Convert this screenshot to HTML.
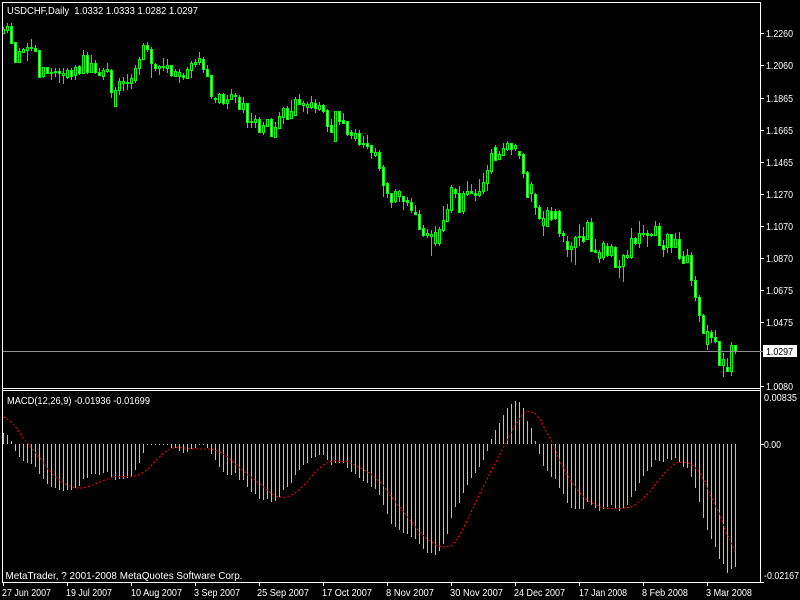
<!DOCTYPE html>
<html><head><meta charset="utf-8"><title>USDCHF Daily</title>
<style>
html,body{margin:0;padding:0;background:#000;width:800px;height:600px;overflow:hidden}
svg{display:block}
text{font-family:"Liberation Sans",sans-serif;font-size:10.5px;fill:#fff}
</style></head><body>
<svg id="s" width="800" height="600" viewBox="0 0 800 600" xmlns="http://www.w3.org/2000/svg">
<rect width="800" height="600" fill="#000"/>
<g id="g" shape-rendering="crispEdges"></g>
<g fill="#fff" shape-rendering="crispEdges">
<rect x="2" y="2" width="759" height="1"/>
<rect x="2" y="2" width="1" height="581"/>
<rect x="760" y="2" width="1" height="581"/>
<rect x="2" y="388" width="759" height="1"/>
<rect x="2" y="390" width="759" height="1"/>
<rect x="2" y="582" width="762" height="1"/>
<rect x="761" y="33" width="3" height="1"/><rect x="761" y="65" width="3" height="1"/><rect x="761" y="98" width="3" height="1"/><rect x="761" y="130" width="3" height="1"/><rect x="761" y="162" width="3" height="1"/><rect x="761" y="194" width="3" height="1"/><rect x="761" y="226" width="3" height="1"/><rect x="761" y="258" width="3" height="1"/><rect x="761" y="290" width="3" height="1"/><rect x="761" y="322" width="3" height="1"/><rect x="761" y="386" width="3" height="1"/><rect x="761" y="444" width="3" height="1"/>
<rect x="3" y="583" width="1" height="3"/><rect x="67" y="583" width="1" height="3"/><rect x="131" y="583" width="1" height="3"/><rect x="195" y="583" width="1" height="3"/><rect x="259" y="583" width="1" height="3"/><rect x="323" y="583" width="1" height="3"/><rect x="387" y="583" width="1" height="3"/><rect x="451" y="583" width="1" height="3"/><rect x="515" y="583" width="1" height="3"/><rect x="579" y="583" width="1" height="3"/><rect x="643" y="583" width="1" height="3"/><rect x="707" y="583" width="1" height="3"/>
</g>
<rect x="3" y="351" width="760" height="1" fill="#909090" shape-rendering="crispEdges"/>
<rect x="763" y="345" width="34" height="12" fill="#fff" shape-rendering="crispEdges"/>
<text x="7" y="14" textLength="191" lengthAdjust="spacingAndGlyphs" xml:space="preserve">USDCHF,Daily  1.0332 1.0333 1.0282 1.0297</text>
<text x="7" y="404" textLength="143" lengthAdjust="spacingAndGlyphs">MACD(12,26,9) -0.01936 -0.01699</text>
<text x="5.5" y="579" textLength="237" lengthAdjust="spacingAndGlyphs">MetaTrader, ? 2001-2008 MetaQuotes Software Corp.</text>
<g>
<text x="766" y="37" textLength="27" lengthAdjust="spacingAndGlyphs">1.2260</text>
<text x="766" y="69" textLength="27" lengthAdjust="spacingAndGlyphs">1.2060</text>
<text x="766" y="102" textLength="27" lengthAdjust="spacingAndGlyphs">1.1865</text>
<text x="766" y="134" textLength="27" lengthAdjust="spacingAndGlyphs">1.1665</text>
<text x="766" y="166" textLength="27" lengthAdjust="spacingAndGlyphs">1.1465</text>
<text x="766" y="198" textLength="27" lengthAdjust="spacingAndGlyphs">1.1270</text>
<text x="766" y="230" textLength="27" lengthAdjust="spacingAndGlyphs">1.1070</text>
<text x="766" y="262" textLength="27" lengthAdjust="spacingAndGlyphs">1.0870</text>
<text x="766" y="294" textLength="27" lengthAdjust="spacingAndGlyphs">1.0675</text>
<text x="766" y="326" textLength="27" lengthAdjust="spacingAndGlyphs">1.0475</text>
<text x="766" y="355" textLength="27" lengthAdjust="spacingAndGlyphs" style="fill:#000">1.0297</text>
<text x="766" y="390" textLength="27" lengthAdjust="spacingAndGlyphs">1.0080</text>
<text x="764" y="401" textLength="33" lengthAdjust="spacingAndGlyphs">0.00835</text>
<text x="764" y="448" textLength="17" lengthAdjust="spacingAndGlyphs">0.00</text>
<text x="764" y="579" textLength="35" lengthAdjust="spacingAndGlyphs">-0.02167</text>
</g>
<g>
<text x="2" y="596" textLength="49" lengthAdjust="spacingAndGlyphs">27 Jun 2007</text>
<text x="66" y="596" textLength="46" lengthAdjust="spacingAndGlyphs">19 Jul 2007</text>
<text x="131" y="596" textLength="51" lengthAdjust="spacingAndGlyphs">10 Aug 2007</text>
<text x="194" y="596" textLength="46" lengthAdjust="spacingAndGlyphs">3 Sep 2007</text>
<text x="257" y="596" textLength="52" lengthAdjust="spacingAndGlyphs">25 Sep 2007</text>
<text x="322" y="596" textLength="50" lengthAdjust="spacingAndGlyphs">17 Oct 2007</text>
<text x="386" y="596" textLength="48" lengthAdjust="spacingAndGlyphs">8 Nov 2007</text>
<text x="450" y="596" textLength="53" lengthAdjust="spacingAndGlyphs">30 Nov 2007</text>
<text x="514" y="596" textLength="51" lengthAdjust="spacingAndGlyphs">24 Dec 2007</text>
<text x="579" y="596" textLength="48" lengthAdjust="spacingAndGlyphs">17 Jan 2008</text>
<text x="642" y="596" textLength="46" lengthAdjust="spacingAndGlyphs">8 Feb 2008</text>
<text x="706" y="596" textLength="46" lengthAdjust="spacingAndGlyphs">3 Mar 2008</text>
</g>
</svg>
<script>
var c1=[[88,98,80,100,0],[78,90,68,100,0],[78,130,68,132,1],[127,185,127,186,1],[153,186,143,188,0],[148,155,143,160,0],[142,150,128,183,0],[142,145,117,152,0],[145,153,135,155,1],[150,230,150,232,1],[202,227,200,235,0],[202,218,200,222,1],[215,218,205,240,0],[213,217,203,232,0],[213,220,205,250,1],[220,226,205,252,0],[210,232,205,238,0],[210,228,205,240,1],[202,225,195,240,0],[198,219,195,225,1],[165,220,150,222,0],[165,215,155,222,1],[190,215,165,220,0],[190,215,180,222,1],[217,226,205,228,1],[210,227,205,240,0],[208,213,188,218,0],[210,275,208,295,1],[270,317,262,322,0],[243,271,235,285,0],[244,248,230,272,0],[246,249,222,270,0],[235,250,222,268,0],[205,240,195,250,0],[178,205,170,225,0],[135,178,130,180,0],[135,148,127,155,1],[148,190,142,235,1],[193,203,190,212,1],[198,205,195,225,0],[198,201,175,212,0],[196,203,177,218,0],[196,226,195,230,1],[213,227,208,232,0],[217,228,208,250,0],[225,232,218,240,1],[208,233,200,237,0],[190,210,183,235,0],[186,192,178,200,0],[175,187,156,195,0],[178,207,172,220,1],[207,227,195,228,1],[226,287,225,298,1],[295,298,290,308,0],[283,305,280,312,0],[283,308,280,315,1],[298,308,285,328,0],[281,298,266,300,0],[284,289,280,310,1],[290,327,285,328,1],[310,327,290,338,0],[310,365,310,385,1],[362,366,340,385,0],[358,366,345,385,0],[358,395,350,396,1]];
var c2=[[135,155,125,165,0],[118,137,118,140,0],[118,168,115,172,1],[142,172,125,174,0],[108,145,97,147,0],[85,110,82,132,0],[85,117,78,120,1],[94,114,60,118,0],[58,105,52,108,0],[58,72,42,75,1],[69,74,63,97,0],[72,80,65,102,0],[65,82,48,88,0],[68,85,58,98,1],[76,87,65,93,0],[76,93,72,98,1],[90,137,88,155,1],[136,156,117,158,1],[94,184,94,185,0],[94,122,94,135,1],[121,129,99,132,1],[124,161,122,168,1],[156,164,150,178,1],[160,174,148,182,0],[160,192,150,198,1],[190,192,168,205,0],[190,197,165,206,1],[196,215,194,236,1],[217,225,205,232,0],[217,263,210,273,1],[262,314,255,350,1],[310,340,306,355,1],[340,365,340,384,1],[334,364,328,370,0],[334,347,330,367,0],[347,362,347,390,1],[361,366,350,378,1],[367,389,354,399,1],[395,402,375,405,1],[403,446,390,448,1],[445,465,435,472,1],[460,466,447,474,0],[463,467,450,528,0],[457,488,438,498,0],[448,488,442,498,0],[421,449,378,456,0],[388,424,372,426,0],[322,389,316,400,0],[328,340,325,355,1],[340,396,318,398,1],[340,392,334,402,0],[332,341,304,347,0],[332,338,312,342,1],[338,345,328,362,1],[332,344,297,350,0],[307,333,280,342,0],[271,308,255,333,0],[220,272,208,283,0],[202,240,195,243,1],[223,238,213,240,0],[205,225,190,228,0],[190,207,183,212,0],[190,208,188,225,1],[195,205,193,212,0],[214,224,212,237,1],[223,278,220,293,1],[277,350,273,350,1]];
var c3=[[163,190,157,215,0],[193,232,190,255,1],[232,265,225,270,1],[265,285,243,318,0],[240,288,232,292,0],[243,268,232,272,1],[243,265,238,270,1],[243,310,240,322,1],[309,316,302,335,1],[332,358,318,380,1],[349,358,335,395,0],[322,350,318,405,0],[319,322,283,348,0],[319,332,292,340,1],[277,326,270,330,0],[277,362,265,365,1],[361,367,328,370,1],[367,383,360,398,0],[340,382,332,390,0],[349,374,340,382,1],[349,374,343,380,0],[351,410,349,415,1],[408,412,390,444,0],[376,409,373,456,0],[376,382,360,388,0],[325,382,294,386,0],[324,338,322,345,1],[310,338,274,354,0],[309,312,285,322,0],[310,316,300,350,1],[313,316,308,320,0],[289,315,273,318,0],[289,344,280,348,1],[344,358,330,380,1],[313,352,310,368,0],[313,352,313,368,1],[328,352,308,355,0],[328,383,307,390,1],[379,398,362,402,1],[376,395,358,400,0],[376,451,365,468,1],[451,502,438,512,1],[502,556,495,575,1],[556,610,553,612,1],[604,643,585,660,0],[606,620,600,638,1],[620,634,600,638,1],[634,704,632,708,1],[686,704,670,742,0],[712,724,684,725,1],[646,724,636,737,0],[646,664,645,672,1]];
var bars=[145,150,168,198,215,228,235,238,245,268,282,297,305,308,315,318,316,315,308,303,282,280,268,268,270,265,262,275,285,282,282,280,275,255,235,205,180,180,180,180,180,180,188,190,198,203,202,192,188,180,180,188,208,225,245,262,270,270,265,285,285,305,320,328,342,345,342,350,347,335,315,305,294,270,255,240,233,219,216,209,211,225,240,234,235,233,248,262,267,278,287,293,305,312,330,360,387,416,426,435,444,447,456,461,478,492,503,504,510,497,477,447,398,366,354,324,300,278,265,245,225,198,162,135,114,90,70,57,47,52,70,108,130,168,207,243,258,275,282,310,327,354,369,372,372,372,352,360,368,378,372,365,360,372,378,370,360,335,318,294,272,258,246,225,228,232,222,225,218,232,246,250,276,308,350,398,435,462,486,522,538,563,551,545];
var sig=[[0,[[10,95],[30,108],[50,130],[70,160],[90,183],[118,215],[142,250],[166,275],[190,293],[214,306],[238,310],[262,306],[290,295],[322,282],[346,275],[394,275],[418,270],[442,255],[466,228],[490,205],[514,190],[530,187],[574,191],[610,193],[634,192],[658,200],[682,215],[706,237],[742,268],[778,295],[802,315]]],[270,[[4,325],[16,333],[40,338],[58,333],[76,325],[94,308],[112,290],[136,260],[160,240],[178,230],[196,227],[232,230],[268,247],[304,268],[340,300],[364,335],[394,372],[424,410],[448,440],[472,462],[502,482],[526,487],[544,482],[560,465],[580,430],[604,380],[632,320],[660,265],[688,210],[712,165],[736,120],[760,85],[778,79]]],[530,[[0,79],[14,85],[30,102],[46,135],[60,158],[70,178],[88,225],[110,267],[130,298],[148,322],[178,350],[208,366],[232,370],[280,370],[304,366],[322,355],[340,340],[358,322],[382,290],[400,268],[418,250],[436,235],[448,232],[472,232],[490,243],[508,260],[526,295],[550,350],[568,385],[586,435],[604,475],[616,497]]]];
var o='';
function R(x,y,w,h,f){return '<rect x="'+x+'" y="'+y+'" width="'+w+'" height="'+h+'" fill="'+f+'"/>';}
bars.forEach(function(z,k){var x=3+4*k,y=Math.round(385+z/3),t=Math.min(y,444),b=Math.max(y,444);o+=R(x,t,1,Math.max(b-t,1),'#c0c0c0');});
var pts=[];
sig.forEach(function(s){s[1].forEach(function(p){pts.push((s[0]+p[0]/3).toFixed(1)+','+(385+p[1]/3).toFixed(1));});});
o+='<polyline points="'+pts.join(' ')+'" fill="none" stroke="#f00" stroke-width="1" stroke-dasharray="2 2"/>';
function draw(a,k0,off){a.forEach(function(c,i){var k=k0+i,x=3+4*k,bt=Math.round(off+c[0]/3),bb=Math.round(off+c[1]/3),wt=Math.round(off+c[2]/3),wb=Math.round(off+c[3]/3);
o+=R(x,wt,1,Math.max(wb-wt,1),'#0f0');
var h=Math.max(bb-bt,1);
o+=R(x-1,bt,3,h+1,'#0f0');
if(h>=2)o+=R(x,bt+1,1,h-1,c[4]?'#fff':'#000');
});}
draw(c1,0,0);draw(c2,65,80);draw(c3,132,130);
document.getElementById('g').innerHTML=o;
</script>
</body></html>
